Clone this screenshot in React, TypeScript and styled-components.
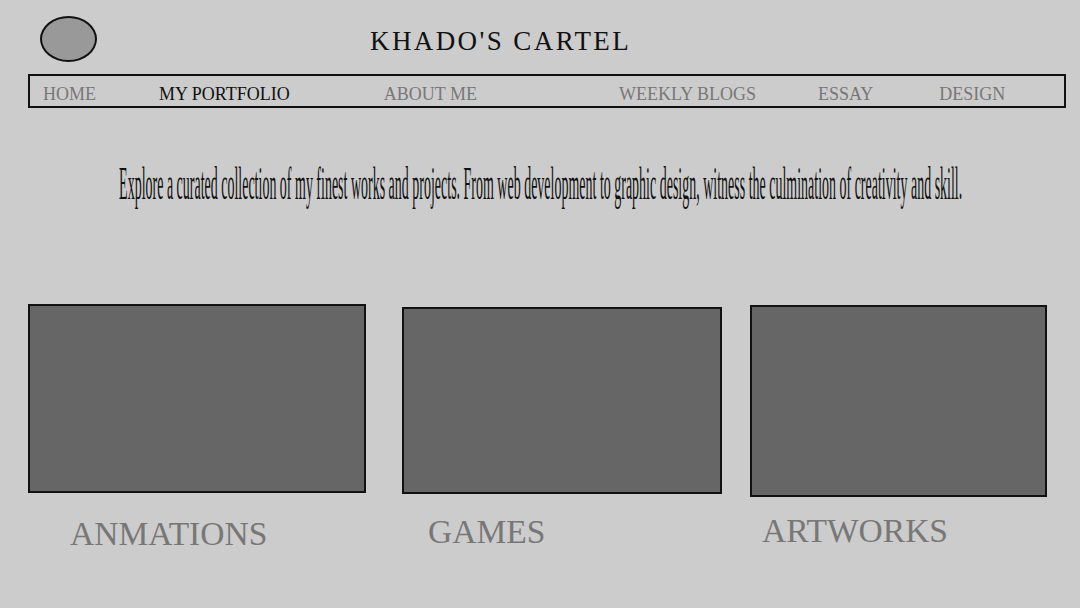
import styled, { createGlobalStyle } from "styled-components";

const GlobalStyle = createGlobalStyle`
  html, body {
    margin: 0;
    padding: 0;
    background: #cccccc;
  }

  body {
    font-family: "Liberation Serif", "Times New Roman", serif;
    color: #111;
  }
`;

type NavLink = {
  label: string;
  gap: number;
  active?: boolean;
};

const links: NavLink[] = [
  { label: "HOME", gap: 0 },
  { label: "MY PORTFOLIO", gap: 63, active: true },
  { label: "ABOUT ME", gap: 94 },
  { label: "WEEKLY BLOGS", gap: 142 },
  { label: "ESSAY", gap: 62 },
  { label: "DESIGN", gap: 66 },
];

type Category = {
  title: string;
  width: number;
  height: number;
  top: number;
  gap: number;
  labelTop: number;
  labelLeft: number;
};

const categories: Category[] = [
  { title: "ANMATIONS", width: 338, height: 189, top: 0, gap: 0, labelTop: 22, labelLeft: 42 },
  { title: "GAMES", width: 320, height: 187, top: 3, gap: 36, labelTop: 19, labelLeft: 26 },
  { title: "ARTWORKS", width: 297, height: 192, top: 1, gap: 28, labelTop: 15, labelLeft: 12 },
];

export default function App() {
  return (
    <>
      <GlobalStyle />
      <Page>
        <Header>
          <Logo aria-label="logo" />
          <SiteTitle>KHADO'S CARTEL</SiteTitle>
        </Header>

        <Nav>
          {links.map((link) => (
            <NavItem key={link.label} $gap={link.gap} $active={link.active}>
              {link.label}
            </NavItem>
          ))}
        </Nav>

        <IntroRow>
          <Intro>
            Explore a curated collection of my finest works and projects. From web
            development to graphic design, witness the culmination of creativity and
            skill.
          </Intro>
        </IntroRow>

        <Gallery>
          {categories.map((cat) => (
            <Column key={cat.title} $gap={cat.gap} $top={cat.top} $width={cat.width}>
              <Thumb $height={cat.height} />
              <Label $top={cat.labelTop} $left={cat.labelLeft}>
                {cat.title}
              </Label>
            </Column>
          ))}
        </Gallery>
      </Page>
    </>
  );
}

const Page = styled.div`
  width: 1080px;
  height: 608px;
  overflow: hidden;
  padding: 16px 0 0 28px;
  box-sizing: border-box;
`;

const Header = styled.header`
  display: flex;
  align-items: center;
  height: 46px;
  padding-left: 12px;
`;

const Logo = styled.div`
  width: 57px;
  height: 46px;
  box-sizing: border-box;
  border-radius: 50%;
  border: 2px solid #111;
  background: #999999;
`;

const SiteTitle = styled.h1`
  margin: 0 0 0 273px;
  padding-top: 5px;
  font-size: 27px;
  font-weight: normal;
  letter-spacing: 2.4px;
  line-height: 1;
  color: #111;
`;

const Nav = styled.nav`
  display: flex;
  align-items: flex-start;
  width: 1038px;
  height: 34px;
  margin-top: 12px;
  box-sizing: border-box;
  border: 2px solid #111;
  padding: 7px 0 0 13px;
`;

const NavItem = styled.span<{ $gap: number; $active?: boolean }>`
  margin-left: ${({ $gap }) => $gap}px;
  font-size: 18px;
  line-height: 22px;
  white-space: nowrap;
  color: ${({ $active }) => ($active ? "#111" : "#777")};
`;

const IntroRow = styled.div`
  display: flex;
  justify-content: center;
  width: 1024px;
  margin-top: 50px;
  margin-left: 1px;
`;

const Intro = styled.p`
  flex: none;
  margin: 0;
  font-size: 46px;
  line-height: 52px;
  white-space: nowrap;
  color: #111;
  transform: scaleX(0.304);
  transform-origin: center;
`;

const Gallery = styled.div`
  display: flex;
  align-items: flex-start;
  margin-top: 94px;
`;

const Column = styled.div<{ $gap: number; $top: number; $width: number }>`
  display: flex;
  flex-direction: column;
  width: ${({ $width }) => $width}px;
  margin-left: ${({ $gap }) => $gap}px;
  margin-top: ${({ $top }) => $top}px;
`;

const Thumb = styled.div<{ $height: number }>`
  height: ${({ $height }) => $height}px;
  box-sizing: border-box;
  border: 2px solid #111;
  background: #666666;
`;

const Label = styled.span<{ $top: number; $left: number }>`
  margin-top: ${({ $top }) => $top}px;
  padding-left: ${({ $left }) => $left}px;
  font-size: 33.5px;
  line-height: 38px;
  white-space: nowrap;
  color: #777;
`;
